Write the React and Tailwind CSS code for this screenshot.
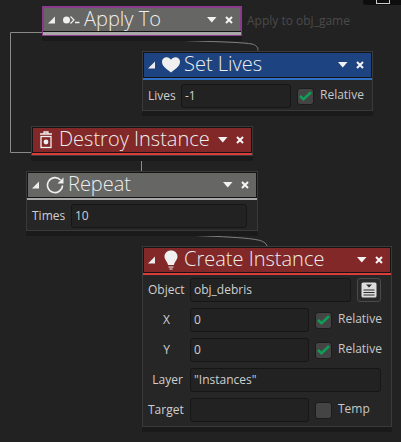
const FONT = "font-['Open_Sans','Noto_Sans',sans-serif]";

function Collapse() {
  return (
    <svg width="8" height="8" viewBox="0 0 8 8" className="shrink-0">
      <path d="M0 7.5 L7 7.5 L7 0.5 Z" fill="#eeeeee" />
    </svg>
  );
}

function Controls() {
  return (
    <div className="flex items-center gap-[8px] ml-auto">
      <svg width="10" height="6" viewBox="0 0 10 6">
        <path d="M0 0 H9.5 L4.75 5.5 Z" fill="#f2f2f2" />
      </svg>
      <svg width="8" height="8" viewBox="0 0 8 8">
        <path d="M1 1 L7 7 M7 1 L1 7" stroke="#f5f5f5" strokeWidth="2" />
      </svg>
    </div>
  );
}

function Header({ title, icon, collapse = true, color, line, ring = "border-[#141414]", h = "h-[24px]", lineH = "h-[2px]", pad = "pl-[4px]" }) {
  return (
    <>
      <div className={`border-x border-t ${ring}`}>
        <div className={`flex items-center pr-[7px] ${h} ${pad} ${color}`}>
          {collapse && <div className="mr-[6px] flex"><Collapse /></div>}
          {icon}
          <span className="text-[20px] font-light leading-[24px] text-[#eeeeee] whitespace-nowrap ml-[4px] -mt-[2px]">{title}</span>
          <Controls />
        </div>
      </div>
      <div className="h-[1px] bg-[#141414]" />
      <div className={`${lineH} ${line}`} />
    </>
  );
}

function Label({ children, w, center }) {
  return (
    <span className={`text-[12px] text-[#d0d0d0] shrink-0 whitespace-nowrap ${center ? "text-center" : ""} ${w}`}>
      {children}
    </span>
  );
}

function Field({ value, w }) {
  return (
    <div className={`h-[24px] flex items-center px-[3px] rounded-[3px] bg-[#222222] border border-[#161616] text-[12px] text-[#d0d0d0] shrink-0 ${w}`}>
      {value}
    </div>
  );
}

function Box({ label, checked }) {
  return (
    <div className="flex items-center ml-[6px]">
      <div className="w-[17px] h-[17px] rounded-[3px] bg-[#444444] border border-[#1c1c1c] flex items-center justify-center">
        {checked && (
          <svg width="13" height="10" viewBox="0 0 13 10">
            <path d="M1 5 L4.5 8.2 L12 1.2" fill="none" stroke="#0f9d58" strokeWidth="2.6" />
          </svg>
        )}
      </div>
      <span className="text-[12px] text-[#c8c8c8] ml-[6px] -mt-[2px]">{label}</span>
    </div>
  );
}

function Node({ pos, border = "border-[#3a3a3a]", children }) {
  return (
    <div className={`absolute border ${border} ${pos} shadow-[0_5px_0_#1a1a1a] bg-[#262626]`}>
      {children}
    </div>
  );
}

const white = "#f0f0f0";

export default function App() {
  return (
    <div className={`relative w-[401px] h-[442px] overflow-hidden bg-[#222222] ${FONT}`}>
      {/* wires between the blocks */}
      <svg width="401" height="442" className="absolute left-0 top-0">
        <path d="M42.5 32.5 H10.5 V152.5 H31" fill="none" stroke="#8a8a8a" />
        <path d="M141.5 157 V171" fill="none" stroke="#8a8a8a" />
        <path d="M145 37.5 C180 42 235 41 252 44 C256 45 258 47 258 50.5" fill="none" stroke="#808080" />
        <path d="M145 232.5 C180 236 240 236 258 240 C263 241 266 243 267 246" fill="none" stroke="#808080" />
      </svg>

      {/* corner of a block above the view */}
      <div className="absolute left-[363px] top-0 w-[38px] h-[5px] bg-[#0e0e0e] rounded-bl-[3px]">
        <div className="ml-[13px] w-[14px] h-[4px] border-b border-x border-[#ccc]" />
      </div>

      <Node pos="left-[42px] top-[6px] w-[200px]" border="border-[#8a3a8a]">
        <Header
          title="Apply To"
          color="bg-[#666664]"
          line="bg-[#a8a8a8]"
          ring="border-[#8a3a8a]"
          h="h-[23px]"
          lineH="h-[3px]"
          icon={
            <svg width="18" height="12" viewBox="0 0 18 12" className="shrink-0">
              <circle cx="4.5" cy="6" r="3.5" fill={white} />
              <path d="M8.5 2.5 L12 6 L8.5 9.5" fill="none" stroke={white} strokeWidth="1.2" />
              <path d="M13 8.5 H17.5" stroke={white} strokeWidth="1.5" />
            </svg>
          }
        />
      </Node>
      <span className="absolute left-[247px] top-[12px] text-[12px] text-[#4a4a4a] whitespace-nowrap">Apply to obj_game</span>

      <Node pos="left-[142px] top-[51px] w-[231px]">
        <Header
          title="Set Lives"
          color="bg-[#1d4480]"
          line="bg-[#2f6fc4]"
          icon={
            <svg width="18" height="16" viewBox="0 0 18 16" className="shrink-0">
              <path d="M9 15.5 C4 11.5 0 9 0 4.8 C0 2 2.2 0.3 4.6 0.3 C6.4 0.3 8 1.3 9 2.8 C10 1.3 11.6 0.3 13.4 0.3 C15.8 0.3 18 2 18 4.8 C18 9 14 11.5 9 15.5 Z" fill={white} />
            </svg>
          }
        />
        <div className="flex items-center pl-[5px] pt-[4px] pb-[2px]">
          <Label w="w-[33px]">Lives</Label>
          <Field value="-1" w="w-[110px]" />
          <Box label="Relative" checked />
        </div>
      </Node>

      <Node pos="left-[31px] top-[126px] w-[222px]">
        <Header
          title="Destroy Instance"
          collapse={false}
          pad="pl-[6px]"
          color="bg-[#822828]"
          line="bg-[#dc3c3c]"
          icon={
            <svg width="16" height="18" viewBox="0 0 16 18" className="shrink-0">
              <path d="M1 3 H13 M5 3 V1 H9 V3" fill="none" stroke={white} strokeWidth="1.3" />
              <rect x="2" y="5.5" width="10" height="11" fill="none" stroke={white} strokeWidth="1.3" />
              <circle cx="7" cy="11" r="2.4" fill={white} />
            </svg>
          }
        />
      </Node>

      <Node pos="left-[26px] top-[171px] w-[232px]">
        <Header
          title="Repeat"
          color="bg-[#666664]"
          line="bg-[#a8a8a8]"
          icon={
            <svg width="18" height="18" viewBox="0 0 18 18" className="shrink-0">
              <path d="M14.5 4 A7.5 7.5 0 1 0 16.5 9.5" fill="none" stroke={white} strokeWidth="1.6" />
              <path d="M17.5 1.5 V7.5 H11.5 Z" fill={white} />
            </svg>
          }
        />
        <div className="flex items-center pl-[5px] pt-[4px] pb-[2px]">
          <Label w="w-[39px]">Times</Label>
          <Field value="10" w="w-[176px]" />
        </div>
      </Node>

      <Node pos="left-[142px] top-[246px] w-[250px]">
        <Header
          title="Create Instance"
          color="bg-[#822828]"
          line="bg-[#dc3c3c]"
          icon={
            <svg width="18" height="20" viewBox="0 0 18 20" className="shrink-0">
              <path d="M9 0.5 C5 0.5 2.5 3.2 2.5 6.5 C2.5 10 5.5 11.5 6 15 H12 C12.5 11.5 15.5 10 15.5 6.5 C15.5 3.2 13 0.5 9 0.5 Z" fill={white} />
              <path d="M6.5 17 H11.5 M7.5 19 H10.5" stroke={white} strokeWidth="1.2" />
            </svg>
          }
        />
        <div className="flex flex-col gap-[6px] pt-[3px] pb-[4px] pl-[5px]">
          <div className="flex items-center">
            <Label w="w-[42px]">Object</Label>
            <Field value="obj_debris" w="w-[161px]" />
            <div className="ml-[6px] w-[24px] h-[24px] rounded-[3px] bg-[#2a2a2a] border border-[#4a4a4a] flex items-center justify-center">
              <svg width="16" height="16" viewBox="0 0 16 16">
                <rect x="0.5" y="0.5" width="15" height="15" rx="1.5" fill="#dddddd" />
                <path d="M5 2.5 H11 L8 5.5 Z" fill="#2a2a2a" />
                <path d="M2.5 8 H13.5 M2.5 10.5 H13.5 M2.5 13 H13.5" stroke="#2a2a2a" />
              </svg>
            </div>
          </div>
          <div className="flex items-center">
            <Label w="w-[37px]" center>X</Label>
            <div className="w-[5px]" />
            <Field value="0" w="w-[119px]" />
            <Box label="Relative" checked />
          </div>
          <div className="flex items-center">
            <Label w="w-[37px]" center>Y</Label>
            <div className="w-[5px]" />
            <Field value="0" w="w-[119px]" />
            <Box label="Relative" checked />
          </div>
          <div className="flex items-center">
            <Label w="w-[39px]" center>Layer</Label>
            <div className="w-[3px]" />
            <Field value={'"Instances"'} w="w-[191px]" />
          </div>
          <div className="flex items-center">
            <Label w="w-[42px]">Target</Label>
            <Field value="" w="w-[119px]" />
            <Box label="Temp" />
          </div>
        </div>
      </Node>
    </div>
  );
}
